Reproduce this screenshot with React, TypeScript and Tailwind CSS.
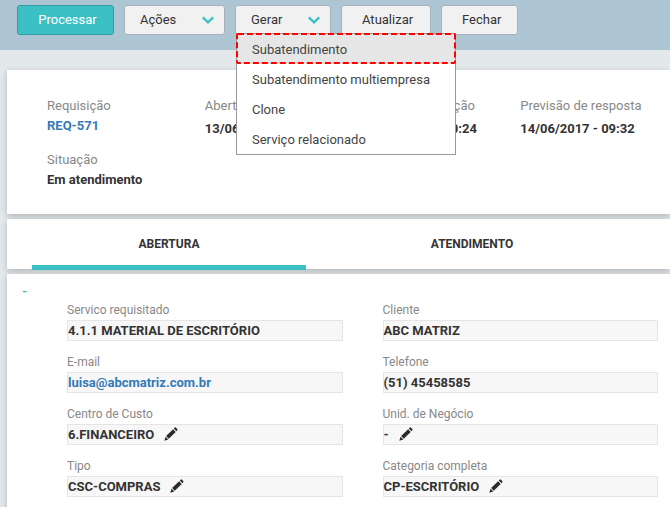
import type { ReactNode } from "react";

function Chevron() {
  return (
    <svg width="12" height="8" viewBox="0 0 12 8" fill="none" stroke="#3bc1c4" strokeWidth="2.3" aria-hidden="true">
      <path d="M0.8 1.4 6 6.4 11.2 1.4" />
    </svg>
  );
}

function EditButton({ label }: { label: string }) {
  return (
    <button type="button" aria-label={`Editar ${label}`} className="ml-2.5 pb-0.5 text-[#2b2b2b]">
      <svg width="14" height="14" viewBox="0 0 14 14" fill="currentColor" aria-hidden="true">
        <path d="M0.3 13.7 1.6 9.7 4.3 12.4Z" />
        <path d="M2.1 9.1 9.1 2.3 11.7 4.9 4.8 11.8Z" />
        <path d="M9.8 1.6 10.9 0.5Q11.4 0.2 11.8 0.6L13.4 2.2Q13.8 2.6 13.4 3.1L12.4 4.2Z" />
      </svg>
    </button>
  );
}

const toolbarButton =
  "flex h-[30px] items-center justify-between rounded-[3px] border border-[#a3b3be] bg-[#f1f1f1] text-[13px] text-[#333]";

const menuItems = ["Subatendimento", "Subatendimento multiempresa", "Clone", "Serviço relacionado"];

function Toolbar() {
  return (
    <header className="flex h-[50px] gap-2.5 bg-[#aec5d3] pt-[5px] pl-[17px]">
      <button
        type="button"
        className="h-[30px] w-[97px] rounded-[3px] border border-[#2f9fa6] bg-[#3bc1c4] pl-1 text-[13px] text-white"
      >
        Processar
      </button>
      <button type="button" className={`${toolbarButton} w-[101px] pr-2.5 pl-[15px]`}>
        Ações
        <Chevron />
      </button>
      <div className="relative">
        <button type="button" aria-expanded="true" className={`${toolbarButton} w-24 pr-2.5 pl-[15px]`}>
          Gerar
          <Chevron />
        </button>
        <ul
          role="menu"
          className="absolute top-7 left-px z-10 w-[220px] border border-[#999] bg-white text-[13px] text-[#444]"
        >
          {menuItems.map((item, i) => (
            <li key={item} role="none" className="relative">
              <button
                type="button"
                role="menuitem"
                className={`block h-[30px] w-full pt-0.5 pl-[15px] text-left ${i === 0 ? "bg-[#e6e6e6]" : ""}`}
              >
                {item}
              </button>
              {i === 0 && (
                <svg className="pointer-events-none absolute -inset-px h-8 w-[220px]" aria-hidden="true">
                  <rect x="1" y="1" width="218" height="29" rx="1" fill="none" stroke="#f00" strokeWidth="2" strokeDasharray="6 3" />
                </svg>
              )}
            </li>
          ))}
        </ul>
      </div>
      <button type="button" className={`${toolbarButton} w-[90px] pl-5`}>
        Atualizar
      </button>
      <button type="button" className={`${toolbarButton} w-[77px] pl-5`}>
        Fechar
      </button>
    </header>
  );
}

function Info({ label, children, className = "" }: { label: string; children: ReactNode; className?: string }) {
  return (
    <div className={className}>
      <dt className="whitespace-nowrap text-[#888]">{label}</dt>
      <dd className="whitespace-nowrap font-bold text-[#333]">{children}</dd>
    </div>
  );
}

function Field({ label, value, link, editable }: { label: string; value: string; link?: boolean; editable?: boolean }) {
  return (
    <div>
      <dt className="text-[12px] leading-[19px] text-[#888]">{label}</dt>
      <dd className="flex h-[21px] items-center border border-[#e5e5e5] bg-[#f7f7f7] text-[13px] font-bold text-[#333]">
        {link ? (
          <a href={`mailto:${value}`} className="text-[#337ab7]">
            {value}
          </a>
        ) : (
          value
        )}
        {editable && <EditButton label={label} />}
      </dd>
    </div>
  );
}

const card = "bg-white shadow-[0_2px_6px_rgba(0,0,0,0.22)]";

export default function App() {
  return (
    <div className="min-h-screen overflow-hidden bg-[#e3e8eb] font-['Roboto',sans-serif]">
      <Toolbar />
      <main className="flex flex-col gap-[5px] pt-5 pl-[7px]">
        <section className={`${card} pt-[26px] pb-6 pl-10`}>
          <dl className="grid grid-cols-4 gap-x-2 gap-y-[11px] text-[13px] leading-5">
            <Info label="Requisição">
              <a href="#req-571" className="text-[#337ab7]">
                REQ-571
              </a>
            </Info>
            <Info label="Abertura" className="space-y-[3px]">
              13/06/2017 - 10:24
            </Info>
            <Info label="Última modificação" className="space-y-[3px]">
              13/06/2017 - 10:24
            </Info>
            <Info label="Previsão de resposta" className="space-y-[3px]">
              14/06/2017 - 09:32
            </Info>
            <Info label="Situação">Em atendimento</Info>
          </dl>
        </section>
        <nav role="tablist" className={`${card} grid h-[50px] grid-cols-2 gap-[29px] pr-[61px] pl-[25px] text-[12px] font-bold text-[#333]`}>
          <button type="button" role="tab" aria-selected="true" className="h-[51px] border-b-5 border-[#3bc1c4] pt-1">
            ABERTURA
          </button>
          <button type="button" role="tab" aria-selected="false" className="h-[51px] border-b-5 border-transparent pt-1">
            ATENDIMENTO
          </button>
        </nav>
        <section className={`${card} flex pr-3 pb-6`}>
          <button type="button" aria-label="Recolher" className="mt-2 h-5 w-[60px] shrink-0 pl-[15px] text-left text-[13px] font-bold text-[#3bc1c4]">
            -
          </button>
          <dl className="grid flex-1 grid-cols-2 gap-x-10 gap-y-3 pt-[27px]">
            <Field label="Servico requisitado" value="4.1.1 MATERIAL DE ESCRITÓRIO" />
            <Field label="Cliente" value="ABC MATRIZ" />
            <Field label="E-mail" value="luisa@abcmatriz.com.br" link />
            <Field label="Telefone" value="(51) 45458585" />
            <Field label="Centro de Custo" value="6.FINANCEIRO" editable />
            <Field label="Unid. de Negócio" value="-" editable />
            <Field label="Tipo" value="CSC-COMPRAS" editable />
            <Field label="Categoria completa" value="CP-ESCRITÓRIO" editable />
          </dl>
        </section>
      </main>
    </div>
  );
}
